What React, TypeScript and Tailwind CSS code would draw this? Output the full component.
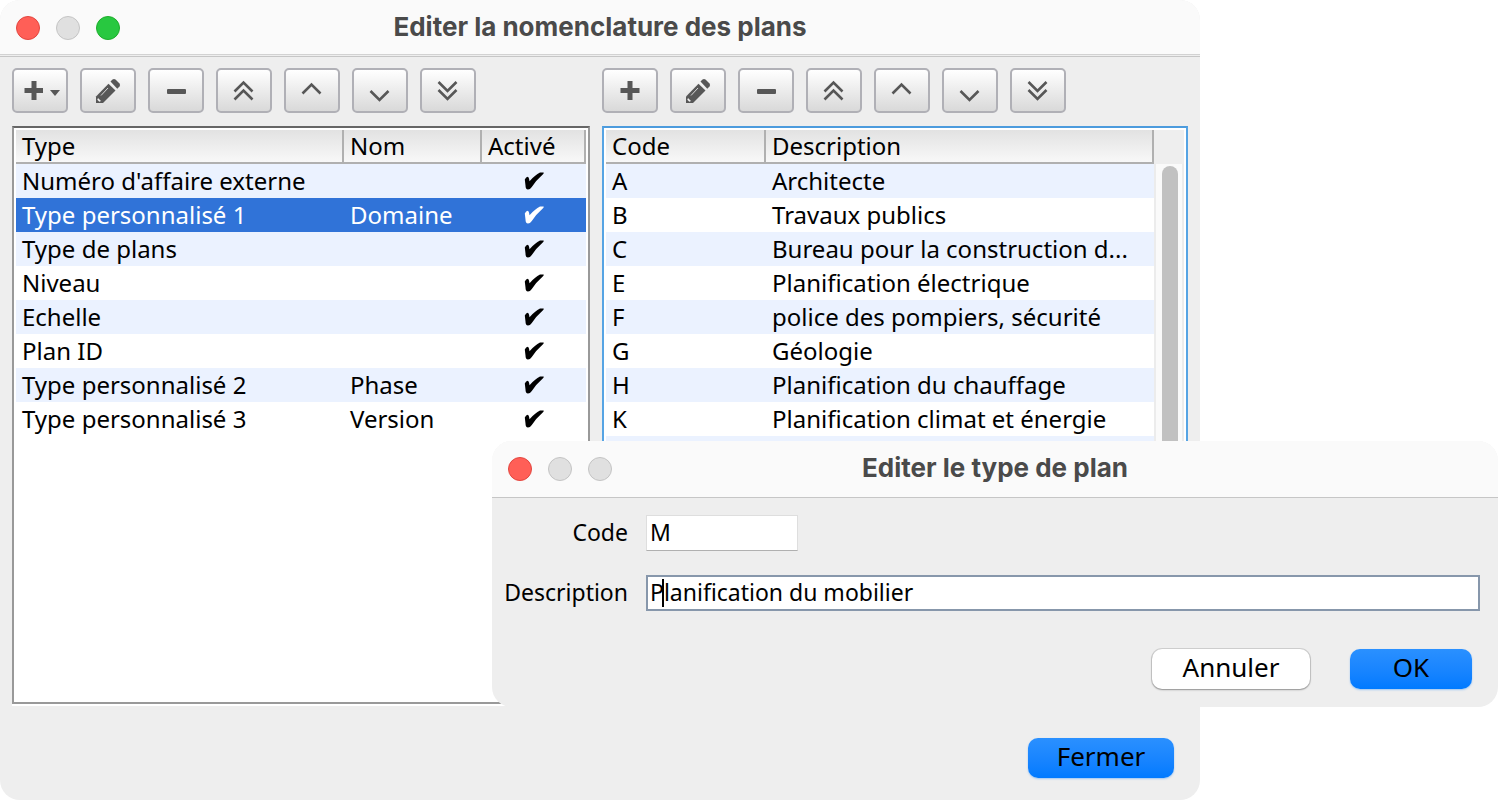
import type { ReactNode } from 'react'

type TypeRow = { type: string; name: string }
type CodeRow = { code: string; description: string }

const typeRows: TypeRow[] = [
  { type: "Numéro d'affaire externe", name: '' },
  { type: 'Type personnalisé 1', name: 'Domaine' },
  { type: 'Type de plans', name: '' },
  { type: 'Niveau', name: '' },
  { type: 'Echelle', name: '' },
  { type: 'Plan ID', name: '' },
  { type: 'Type personnalisé 2', name: 'Phase' },
  { type: 'Type personnalisé 3', name: 'Version' },
]

const codeRows: CodeRow[] = [
  { code: 'A', description: 'Architecte' },
  { code: 'B', description: 'Travaux publics' },
  { code: 'C', description: 'Bureau pour la construction d...' },
  { code: 'E', description: 'Planification électrique' },
  { code: 'F', description: 'police des pompiers, sécurité' },
  { code: 'G', description: 'Géologie' },
  { code: 'H', description: 'Planification du chauffage' },
  { code: 'K', description: 'Planification climat et énergie' },
  { code: '', description: '' },
]

const selectedType = 1

function Chevrons({ points }: { points: string[] }) {
  return (
    <g fill="none" stroke="#575757" strokeWidth="2.6">
      {points.map((p) => (
        <polyline key={p} points={p} />
      ))}
    </g>
  )
}

function Pencil() {
  return (
    <g fill="#575757">
      <path d="M16 35v-6.500l12.500-12.700 7 6.700L23 35z" />
      <path d="M30.500 13.500l2-2q1.500-1.200 3 0l4 4q1.200 1.500 0 3l-2.200 2.200z" />
      <path d="M21 27.500l7-7.500" stroke="#d8d8d8" strokeWidth="1" />
      <path d="M18 30l3 3-1.700.700-2-2z" fill="#f0f0f0" />
    </g>
  )
}

function ToolButton({ label, children }: { label: string; children: ReactNode }) {
  return (
    <button
      type="button"
      aria-label={label}
      className="h-[45px] w-14 rounded-[5px] border-2 border-[#b0b0b6] bg-linear-to-b from-white to-[#d9d9d9]"
    >
      <svg viewBox="2 2 52 41" className="block h-[41px] w-[52px]">
        {children}
      </svg>
    </button>
  )
}

function Toolbar({ withMenu = false }: { withMenu?: boolean }) {
  return (
    <div className="flex gap-3">
      <ToolButton label="Ajouter">
        {withMenu ? (
          <g fill="#575757">
            <path d="M19.500 13h5v7h6.500v5h-6.500v7h-5v-7h-7v-5h7z" />
            <path d="M38 22h10l-5 6z" />
          </g>
        ) : (
          <path fill="#575757" d="M25.500 13h5v7h7v5h-7v7h-5v-7h-7v-5h7z" />
        )}
      </ToolButton>
      <ToolButton label="Modifier">
        <Pencil />
      </ToolButton>
      <ToolButton label="Supprimer">
        <rect x="19" y="21" width="19" height="5" rx="1" fill="#575757" />
      </ToolButton>
      <ToolButton label="Tout en haut">
        <Chevrons points={['18.5,23.5 27.5,14.500 36.5,23.5', '18.5,31.5 27.5,22.500 36.5,31.5']} />
      </ToolButton>
      <ToolButton label="Monter">
        <Chevrons points={['18.5,25.5 27.5,16.500 36.5,25.5']} />
      </ToolButton>
      <ToolButton label="Descendre">
        <Chevrons points={['18.5,23 27.5,32 36.5,23']} />
      </ToolButton>
      <ToolButton label="Tout en bas">
        <Chevrons points={['18.5,14 27.5,23 36.5,14', '18.5,22 27.5,31 36.5,22']} />
      </ToolButton>
    </div>
  )
}

function TitleBar({ title, zoomable = false }: { title: string; zoomable?: boolean }) {
  return (
    <div className="grid grid-cols-[1fr_auto_1fr] items-start bg-[#fafafa] px-4">
      <div className="flex gap-4 pt-4">
        <span className="size-6 rounded-full border border-[#e2463f] bg-[#ff5f57]" />
        <span className="size-6 rounded-full border border-[#c4c4c4] bg-[#e0e0e0]" />
        {zoomable ? (
          <span className="size-6 rounded-full border border-[#1dad2b] bg-[#28c840]" />
        ) : (
          <span className="size-6 rounded-full border border-[#c4c4c4] bg-[#e0e0e0]" />
        )}
      </div>
      <h1 className="font-[Inter,sans-serif] text-[26px] leading-[54px] font-bold text-[#4a4a4a]">{title}</h1>
    </div>
  )
}

function Check() {
  return (
    <svg viewBox="0 0 20 18" className="mx-auto block h-[18px] w-5" fill="currentColor" role="img" aria-label="Activé">
      <path d="M.8 7.500Q2 4.700 3.800 4.700Q5 5 5.500 9.300Q11 3 16 .600L19.500.400Q20.200 1.200 19 2.300Q12 8.500 7.800 15Q6 17.500 4 17.500Q1.500 17.500 1.500 13.500Z" />
    </svg>
  )
}

const headCell =
  'h-[34px] truncate border-r-2 border-b-2 border-[#b0b0b0] bg-linear-to-b from-[#e2e2e2] to-[#f8f8f8] px-1.5 text-left leading-8 font-normal'
const cell = 'h-[34px] truncate px-1.5'

function TypeTable() {
  return (
    <div className="flex-1 border-2 border-t-[#666] border-r-[#999] border-b-[#999] border-l-[#999] bg-white p-0.5 shadow-[0_2px_0_#fff]">
      <table className="w-full table-fixed border-separate border-spacing-0">
        <colgroup>
          <col />
          <col className="w-[138px]" />
          <col className="w-[104px]" />
        </colgroup>
        <thead>
          <tr>
            <th className={headCell}>Type</th>
            <th className={headCell}>Nom</th>
            <th className={headCell}>Activé</th>
          </tr>
        </thead>
        <tbody>
          {typeRows.map((row, i) => (
            <tr
              key={row.type}
              className={i === selectedType ? 'bg-[#3073d8] text-white' : i % 2 === 0 && i < 7 ? 'bg-[#ebf2ff]' : 'bg-white'}
            >
              <td className={cell}>{row.type}</td>
              <td className={cell}>{row.name}</td>
              <td className={cell}>
                <Check />
              </td>
            </tr>
          ))}
        </tbody>
      </table>
    </div>
  )
}

function CodeTable() {
  return (
    <div className="flex flex-1 border-2 border-[#56a4e4] border-t-[#4c9bdd] bg-white p-0.5">
      <table className="min-w-0 flex-1 table-fixed self-start border-separate border-spacing-0">
        <colgroup>
          <col className="w-40" />
          <col />
        </colgroup>
        <thead>
          <tr>
            <th className={headCell}>Code</th>
            <th className={headCell}>Description</th>
          </tr>
        </thead>
        <tbody>
          {codeRows.map((row, i) => (
            <tr key={i} className={i % 2 === 0 ? 'bg-[#ebf2ff]' : 'bg-white'}>
              <td className={cell}>{row.code}</td>
              <td className={cell}>{row.description}</td>
            </tr>
          ))}
        </tbody>
      </table>
      <div className="flex w-[30px] flex-col">
        <div className="h-[34px] bg-[#eee]" />
        <div className="flex flex-1 border-x-2 border-[#ececec] bg-[#fafafa] pt-0.5 pl-1.5">
          <div className="h-[400px] w-4 rounded-full bg-[#c1c1c1]" />
        </div>
      </div>
    </div>
  )
}

const primaryButton =
  'h-10 rounded-[10px] bg-linear-to-b from-[#2a90ff] to-[#007aff] pb-1 text-center shadow-[0_1px_2px_rgba(0,122,255,0.35)]'

function EditDialog() {
  return (
    <section
      role="dialog"
      aria-label="Editer le type de plan"
      className="absolute top-[441px] right-0 left-[492px] overflow-hidden rounded-[20px] bg-[#eee] pb-[18px]"
    >
      <div className="border-b border-[#c6c6c6] bg-[#fafafa] pb-0.5">
        <TitleBar title="Editer le type de plan" />
      </div>
      <form className="pt-[17px] pr-[18px]">
        <div className="grid grid-cols-[136px_1fr] items-center gap-x-[18px] gap-y-6 text-[23px]">
          <label htmlFor="code" className="pb-0.5 text-right">
            Code
          </label>
          <input
            id="code"
            defaultValue="M"
            className="h-9 w-[152px] border border-[#dedede] border-b-[#b0b0b0] bg-white px-[3px] pb-0.5 outline-none"
          />
          <label htmlFor="description" className="pb-0.5 text-right">
            Description
          </label>
          <div className="relative">
            <input
              id="description"
              defaultValue="Planification du mobilier"
              className="h-9 w-full border-2 border-[#8797ab] bg-white px-0.5 pb-0.5 outline-none"
            />
            <span className="absolute top-1 left-4 h-7 w-0.5 bg-black" />
          </div>
        </div>
        <div className="mt-[38px] flex justify-end gap-10 pr-2 text-[26px] leading-9">
          <button
            type="button"
            className="h-10 w-[158px] rounded-[10px] bg-white pb-1 shadow-[0_0_0_1px_rgba(0,0,0,0.12),0_1px_2px_rgba(0,0,0,0.3)]"
          >
            Annuler
          </button>
          <button type="button" className={`${primaryButton} w-[122px]`}>
            OK
          </button>
        </div>
      </form>
    </section>
  )
}

export default function App() {
  return (
    <div className="relative min-h-screen bg-white font-['Noto_Sans',sans-serif] text-[24px] leading-[34px] text-black">
      <main className="mr-[298px] flex min-h-screen flex-col overflow-hidden rounded-[20px] bg-[#eee]">
        <TitleBar title="Editer la nomenclature des plans" zoomable />
        <div className="h-[3px] border-y border-t-[#d2d2d2] border-b-[#c6c6c6]" />
        <div className="grid flex-1 grid-cols-[578fr_586fr] gap-3 px-3 pt-[11px]">
          <section className="flex min-w-0 flex-col gap-[13px]">
            <Toolbar withMenu />
            <TypeTable />
          </section>
          <section className="flex min-w-0 flex-col gap-[13px]">
            <Toolbar />
            <CodeTable />
          </section>
        </div>
        <footer className="flex justify-end pt-[34px] pr-[26px] pb-[22px] text-[26px] leading-9">
          <button type="button" className={`${primaryButton} w-[146px]`}>
            Fermer
          </button>
        </footer>
      </main>
      <EditDialog />
    </div>
  )
}
